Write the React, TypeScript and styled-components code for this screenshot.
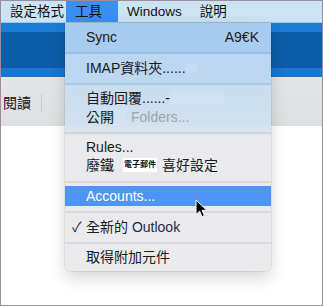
import React from 'react';
import styled, { createGlobalStyle } from 'styled-components';

const GlobalStyle = createGlobalStyle`
  html, body {
    margin: 0;
    padding: 0;
    background: #ffffff;
  }
  * {
    box-sizing: border-box;
  }
`;

const FONT = `"Liberation Sans", "Noto Sans CJK TC", "Noto Sans", sans-serif`;

const Frame = styled.div`
  position: relative;
  width: 323px;
  height: 306px;
  border: 1px solid #9b8d9c;
  overflow: hidden;
  background: #ffffff;
  font-family: ${FONT};
  color: #141414;
`;

const MenuBar = styled.div`
  height: 22px;
  display: flex;
  align-items: stretch;
  padding-left: 8px;
  background: #cae4f4;
  border-bottom: 1px solid #a9c6da;
  font-size: 13.5px;
`;

const BarItem = styled.div<{ $active?: boolean; $pl: number; $pr: number }>`
  display: flex;
  align-items: center;
  padding: 0 ${({ $pr }) => $pr}px 0 ${({ $pl }) => $pl}px;
  background: ${({ $active }) => ($active ? '#3c8ef2' : 'transparent')};
  color: #111;
  line-height: 22px;
`;

const Ribbon = styled.div`
  height: 54px;
  background: linear-gradient(
    to bottom,
    #1b7cd5 0px,
    #1b7cd5 9px,
    #0c5da8 9px,
    #0c5da8 45px,
    #1877d1 45px,
    #1877d1 54px
  );
`;

const Toolbar = styled.div`
  height: 49px;
  display: flex;
  align-items: center;
  padding-left: 2px;
  padding-top: 2px;
  background: linear-gradient(to bottom, #e4e5e6, #dfe0e1);
  font-size: 14px;
`;

const ToolLabel = styled.span`
  line-height: 18px;
`;

const ToolDivider = styled.span`
  width: 1px;
  height: 18px;
  margin-left: 10px;
  background: #c9cacb;
`;

const Dropdown = styled.div`
  position: absolute;
  left: 64px;
  top: 22px;
  width: 206px;
  border-radius: 0 0 6px 6px;
  overflow: hidden;
  font-size: 14px;
  box-shadow: 0 6px 16px rgba(0, 0, 0, 0.18), 0 0 0 0.5px rgba(0, 0, 0, 0.12);
  background: linear-gradient(
    to bottom,
    #a7cbef 0px,
    #a9cdf0 30px,
    #bad6f1 31px,
    #bfd8f1 61px,
    #c8ddf0 62px,
    #cfe0ef 100px,
    #dfe5ec 108px,
    #e9eaec 114px,
    #ebebed 100%
  );
`;

const Group = styled.div<{ $pt: number; $pb: number }>`
  padding: ${({ $pt }) => $pt}px 0 ${({ $pb }) => $pb}px;
`;

const Separator = styled.div<{ $tone?: 'blue' | 'grey' }>`
  height: 2px;
  background: ${({ $tone }) => ($tone === 'blue' ? 'rgba(70, 110, 160, 0.16)' : 'rgba(0, 0, 0, 0.07)')};
`;

const Row = styled.div<{ $active?: boolean; $h?: number; $check?: boolean }>`
  height: ${({ $h }) => $h ?? 19}px;
  display: flex;
  align-items: center;
  padding: 0 12px 0 ${({ $check }) => ($check ? 7 : 21)}px;
  line-height: 19px;
  white-space: nowrap;
  background: ${({ $active }) => ($active ? '#4f95f6' : 'transparent')};
  color: ${({ $active }) => ($active ? '#ffffff' : '#1a1a1a')};
`;

const Shortcut = styled.span`
  margin-left: auto;
  color: #1a1a1a;
`;

const Dim = styled.span`
  color: #a2a4a7;
  margin-left: 4px;
`;

const Smudge = styled.span<{ $w: number; $h: number }>`
  display: inline-block;
  width: ${({ $w }) => $w}px;
  height: ${({ $h }) => $h}px;
  background: rgba(255, 255, 255, 0.12);
`;

const Tag = styled.span`
  display: inline-flex;
  align-items: center;
  height: 14px;
  margin: 0 5px 0 9px;
  padding: 0 1px;
  background: #ffffff;
  font-size: 8px;
  font-weight: 700;
  line-height: 14px;
  color: #111;
`;

const Check = styled.span`
  width: 14px;
  flex-shrink: 0;
  font-size: 14px;
  color: #2b2b2b;
`;

const Brand = styled.span`
  color: #1c2a4c;
`;

const Cursor = styled.svg`
  position: absolute;
  left: 194px;
  top: 198px;
`;

export default function App() {
  return (
    <>
      <GlobalStyle />
      <Frame>
        <MenuBar>
          <BarItem $pl={1} $pr={2}>設定格式</BarItem>
          <BarItem $active $pl={9} $pr={16}>工具</BarItem>
          <BarItem $pl={9} $pr={18}>Windows</BarItem>
          <BarItem $pl={0} $pr={9}>說明</BarItem>
        </MenuBar>
        <Ribbon />
        <Toolbar>
          <ToolLabel>閱讀</ToolLabel>
          <ToolDivider />
        </Toolbar>

        <Dropdown>
          <Group $pt={5} $pb={5}>
            <Row>
              Sync
              <Shortcut>A9€K</Shortcut>
            </Row>
          </Group>
          <Separator $tone="blue" />
          <Group $pt={5} $pb={5}>
            <Row>
              IMAP資料夾......
              <Smudge $w={11} $h={9} />
            </Row>
          </Group>
          <Separator $tone="blue" />
          <Group $pt={4} $pb={5}>
            <Row>
              自動回覆......-
              <Smudge $w={54} $h={13} />
            </Row>
            <Row>
              公開
              <Smudge $w={13} $h={15} />
              <Dim>Folders...</Dim>
            </Row>
          </Group>
          <Separator />
          <Group $pt={4} $pb={7}>
            <Row $h={18}>Rules...</Row>
            <Row $h={18}>
              廢鐵
              <Tag>電子郵件</Tag>
              喜好設定
            </Row>
          </Group>
          <Separator />
          <Group $pt={3} $pb={5}>
            <Row $active $h={20}>Accounts...</Row>
          </Group>
          <Separator />
          <Group $pt={5} $pb={5}>
            <Row $check>
              <Check>✓</Check>
              全新的 <Brand>&nbsp;Outlook</Brand>
            </Row>
          </Group>
          <Separator />
          <Group $pt={4} $pb={4}>
            <Row>取得附加元件</Row>
          </Group>
        </Dropdown>

        <Cursor width="13" height="19" viewBox="0 0 13 19">
          <path
            d="M1 1 L1 15.5 L4.6 12.2 L7 17.6 L9.4 16.5 L7.1 11.3 L11.8 11.3 Z"
            fill="#000"
            stroke="#fff"
            strokeWidth="1"
            strokeLinejoin="round"
          />
        </Cursor>
      </Frame>
    </>
  );
}
